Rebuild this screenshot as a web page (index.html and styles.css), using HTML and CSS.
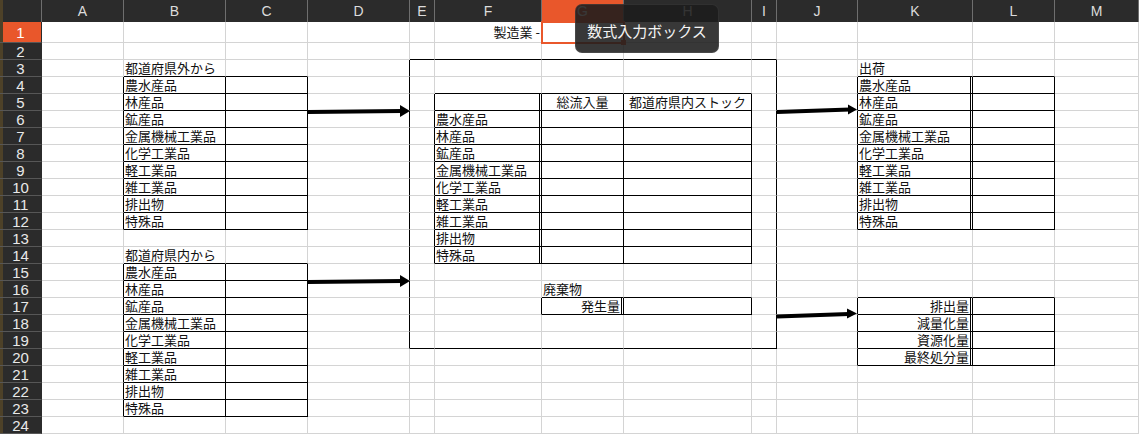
FILE: index.html
```html
<!DOCTYPE html>
<html lang="ja">
<head>
    <meta charset="UTF-8">
    <title>製造業 - 物質フロー</title>
    <link rel="stylesheet" href="styles.css">
</head>
<body>
<div class="wrap">
    <div class="sheet">
        <!-- 列見出し -->
        <div class="ch"></div><div class="ch">A</div><div class="ch">B</div><div class="ch">C</div><div class="ch">D</div><div class="ch">E</div><div class="ch">F</div><div class="ch sel">G</div><div class="ch">H</div><div class="ch">I</div><div class="ch">J</div><div class="ch">K</div><div class="ch">L</div><div class="ch">M</div>
        <!-- 1 -->
        <div class="rh sel">1</div><div></div><div></div><div></div><div></div><div></div><div class="r">製造業 -</div><div class="cur"></div><div></div><div></div><div></div><div></div><div></div><div></div>
        <!-- 2 -->
        <div class="rh">2</div><div></div><div></div><div></div><div></div><div class="bb"></div><div class="bb"></div><div class="bb"></div><div class="bb"></div><div class="bb"></div><div></div><div></div><div></div><div></div>
        <!-- 3 -->
        <div class="rh">3</div><div></div><div class="bb">都道府県外から</div><div class="bb"></div><div class="br"></div><div></div><div></div><div></div><div></div><div class="br"></div><div></div><div class="bb">出荷</div><div class="bb"></div><div></div>
        <!-- 4 -->
        <div class="rh">4</div><div class="br"></div><div class="br bb">農水産品</div><div class="br bb"></div><div class="br"></div><div></div><div class="bb"></div><div class="bb"></div><div class="bb"></div><div class="br"></div><div class="br"></div><div class="dbl bb">農水産品</div><div class="br bb"></div><div></div>
        <!-- 5 -->
        <div class="rh">5</div><div class="br"></div><div class="br bb">林産品</div><div class="br bb"></div><div class="br"></div><div class="br"></div><div class="dbl bb"></div><div class="br bb c">総流入量</div><div class="br bb c">都道府県内ストック</div><div class="br"></div><div class="br"></div><div class="dbl bb">林産品</div><div class="br bb"></div><div></div>
        <!-- 6 -->
        <div class="rh">6</div><div class="br"></div><div class="br bb">鉱産品</div><div class="br bb"></div><div class="br"></div><div class="br"></div><div class="dbl bb">農水産品</div><div class="br bb"></div><div class="br bb"></div><div class="br"></div><div class="br"></div><div class="dbl bb">鉱産品</div><div class="br bb"></div><div></div>
        <!-- 7 -->
        <div class="rh">7</div><div class="br"></div><div class="br bb">金属機械工業品</div><div class="br bb"></div><div class="br"></div><div class="br"></div><div class="dbl bb">林産品</div><div class="br bb"></div><div class="br bb"></div><div class="br"></div><div class="br"></div><div class="dbl bb">金属機械工業品</div><div class="br bb"></div><div></div>
        <!-- 8 -->
        <div class="rh">8</div><div class="br"></div><div class="br bb">化学工業品</div><div class="br bb"></div><div class="br"></div><div class="br"></div><div class="dbl bb">鉱産品</div><div class="br bb"></div><div class="br bb"></div><div class="br"></div><div class="br"></div><div class="dbl bb">化学工業品</div><div class="br bb"></div><div></div>
        <!-- 9 -->
        <div class="rh">9</div><div class="br"></div><div class="br bb">軽工業品</div><div class="br bb"></div><div class="br"></div><div class="br"></div><div class="dbl bb">金属機械工業品</div><div class="br bb"></div><div class="br bb"></div><div class="br"></div><div class="br"></div><div class="dbl bb">軽工業品</div><div class="br bb"></div><div></div>
        <!-- 10 -->
        <div class="rh">10</div><div class="br"></div><div class="br bb">雑工業品</div><div class="br bb"></div><div class="br"></div><div class="br"></div><div class="dbl bb">化学工業品</div><div class="br bb"></div><div class="br bb"></div><div class="br"></div><div class="br"></div><div class="dbl bb">雑工業品</div><div class="br bb"></div><div></div>
        <!-- 11 -->
        <div class="rh">11</div><div class="br"></div><div class="br bb">排出物</div><div class="br bb"></div><div class="br"></div><div class="br"></div><div class="dbl bb">軽工業品</div><div class="br bb"></div><div class="br bb"></div><div class="br"></div><div class="br"></div><div class="dbl bb">排出物</div><div class="br bb"></div><div></div>
        <!-- 12 -->
        <div class="rh">12</div><div class="br"></div><div class="br bb">特殊品</div><div class="br bb"></div><div class="br"></div><div class="br"></div><div class="dbl bb">雑工業品</div><div class="br bb"></div><div class="br bb"></div><div class="br"></div><div class="br"></div><div class="dbl bb">特殊品</div><div class="br bb"></div><div></div>
        <!-- 13 -->
        <div class="rh">13</div><div></div><div></div><div></div><div class="br"></div><div class="br"></div><div class="dbl bb">排出物</div><div class="br bb"></div><div class="br bb"></div><div class="br"></div><div></div><div></div><div></div><div></div>
        <!-- 14 -->
        <div class="rh">14</div><div></div><div class="bb">都道府県内から</div><div class="bb"></div><div class="br"></div><div class="br"></div><div class="dbl bb">特殊品</div><div class="br bb"></div><div class="br bb"></div><div class="br"></div><div></div><div></div><div></div><div></div>
        <!-- 15 -->
        <div class="rh">15</div><div class="br"></div><div class="br bb">農水産品</div><div class="br bb"></div><div class="br"></div><div></div><div></div><div></div><div></div><div class="br"></div><div></div><div></div><div></div><div></div>
        <!-- 16 -->
        <div class="rh">16</div><div class="br"></div><div class="br bb">林産品</div><div class="br bb"></div><div class="br"></div><div></div><div></div><div class="bb">廃棄物</div><div class="bb"></div><div class="br"></div><div></div><div class="bb"></div><div class="bb"></div><div></div>
        <!-- 17 -->
        <div class="rh">17</div><div class="br"></div><div class="br bb">鉱産品</div><div class="br bb"></div><div class="br"></div><div></div><div class="br"></div><div class="dbl bb r">発生量</div><div class="br bb"></div><div class="br"></div><div class="br"></div><div class="dbl bb r">排出量</div><div class="br bb"></div><div></div>
        <!-- 18 -->
        <div class="rh">18</div><div class="br"></div><div class="br bb">金属機械工業品</div><div class="br bb"></div><div class="br"></div><div></div><div></div><div></div><div></div><div class="br"></div><div class="br"></div><div class="dbl bb r">減量化量</div><div class="br bb"></div><div></div>
        <!-- 19 -->
        <div class="rh">19</div><div class="br"></div><div class="br bb">化学工業品</div><div class="br bb"></div><div class="br"></div><div class="bb"></div><div class="bb"></div><div class="bb"></div><div class="bb"></div><div class="br bb"></div><div class="br"></div><div class="dbl bb r">資源化量</div><div class="br bb"></div><div></div>
        <!-- 20 -->
        <div class="rh">20</div><div class="br"></div><div class="br bb">軽工業品</div><div class="br bb"></div><div></div><div></div><div></div><div></div><div></div><div></div><div class="br"></div><div class="dbl bb r">最終処分量</div><div class="br bb"></div><div></div>
        <!-- 21 -->
        <div class="rh">21</div><div class="br"></div><div class="br bb">雑工業品</div><div class="br bb"></div><div></div><div></div><div></div><div></div><div></div><div></div><div></div><div></div><div></div><div></div>
        <!-- 22 -->
        <div class="rh">22</div><div class="br"></div><div class="br bb">排出物</div><div class="br bb"></div><div></div><div></div><div></div><div></div><div></div><div></div><div></div><div></div><div></div><div></div>
        <!-- 23 -->
        <div class="rh">23</div><div class="br"></div><div class="br bb">特殊品</div><div class="br bb"></div><div></div><div></div><div></div><div></div><div></div><div></div><div></div><div></div><div></div><div></div>
        <!-- 24 -->
        <div class="rh">24</div><div></div><div></div><div></div><div></div><div></div><div></div><div></div><div></div><div></div><div></div><div></div><div></div><div></div>
    </div>

    <!-- 矢印 -->
    <svg class="arrows" width="1139" height="434" viewBox="0 0 1139 434">
        <g stroke="#000" stroke-width="4">
            <line x1="308" y1="112" x2="402" y2="111"/>
            <line x1="308" y1="282" x2="402" y2="281"/>
            <line x1="777" y1="112" x2="850" y2="109.5"/>
            <line x1="777" y1="316.5" x2="849" y2="314"/>
        </g>
        <g fill="#000">
            <polygon points="400,105 410,111 400,117"/>
            <polygon points="400,275 410,281 400,287"/>
            <polygon points="848,104.5 857,109.5 848,114.5"/>
            <polygon points="847,308.5 857,313.5 847,318.5"/>
        </g>
    </svg>

    <div class="tip">数式入力ボックス</div>
</div>
</body>
</html>
```

FILE: styles.css
```css
* {
    box-sizing: border-box;
}
body {
    margin: 0;
    background: #fff;
    font-family: "Noto Sans CJK JP", "Noto Sans", sans-serif;
    overflow: hidden;
}
.wrap {
    position: relative;
    width: 1139px;
    height: 434px;
}
.sheet {
    display: grid;
    grid-template-columns: 42px 82px 102px 82px 102px 25px 107px 82px 128px 25px 81px 115px 82px 1fr;
    grid-template-rows: 22px 21px repeat(23, 17px);
    height: 100%;
}
.sheet > div {
    display: flex;
    align-items: center;
    padding: 0 1px;
    border-right: 1px solid #d4d4d4;
    border-bottom: 1px solid #d4d4d4;
    font-size: 13px;
    line-height: 16px;
    color: #111;
    white-space: nowrap;
}

/* 見出し */
.sheet > .ch {
    justify-content: center;
    background: #2b2b2b;
    color: #dcdcdc;
    font-family: "Liberation Sans", Arial, sans-serif;
    font-size: 14px;
    border-right-color: #6e6e6e;
    border-bottom: 0;
}
.sheet > .ch:first-child {
    box-shadow: inset 3px 0 #4d4128;
}
.sheet > .rh {
    justify-content: center;
    background: #2b2b2b;
    color: #e8e8e8;
    font-family: "Liberation Sans", Arial, sans-serif;
    font-size: 15px;
    line-height: 15px;
    border-right-color: #2b2b2b;
    border-bottom-color: #575757;
    box-shadow: inset 3px 0 #4d4128;
}
.sheet > .sel {
    background: #e9572b;
    color: #fff;
}

/* 罫線 */
.sheet > .bb { border-bottom-color: #000; }
.sheet > .br { border-right-color: #000; }
.sheet > .dbl { border-right: 3px double #000; }
.sheet > .r { justify-content: flex-end; }
.sheet > .c { justify-content: center; }

/* 選択セル */
.sheet > .cur {
    position: relative;
    outline: 2px solid #e9572b;
    outline-offset: -1px;
}
.cur::after {
    content: "";
    position: absolute;
    right: -3px;
    bottom: -3px;
    width: 5px;
    height: 5px;
    background: #e9572b;
}

.arrows {
    position: absolute;
    left: 0;
    top: 0;
    pointer-events: none;
}

/* ツールチップ */
.tip {
    position: absolute;
    left: 575px;
    top: 4px;
    width: 144px;
    height: 49px;
    padding-top: 3px;
    display: flex;
    align-items: center;
    justify-content: center;
    background: rgba(28, 28, 28, 0.88);
    border: 1px solid rgba(255, 255, 255, 0.08);
    border-radius: 7px;
    color: #f4f4f4;
    font-size: 15px;
}
```
